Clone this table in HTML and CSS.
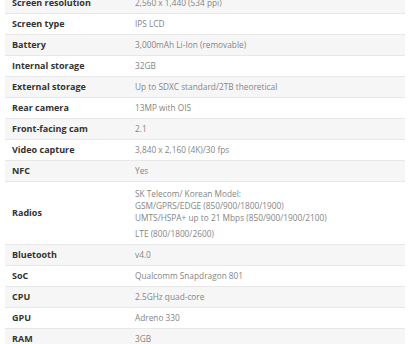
FILE: index.html
```html
<!DOCTYPE html>
<html>
<head>
<meta charset="utf-8">
<link rel="stylesheet" href="styles.css">
</head>
<body>
<div class="specs">
<table class="spec-table">
<tr><th>Screen resolution</th><td>2,560 x 1,440 (534 ppi)</td></tr>
<tr><th>Screen type</th><td>IPS LCD</td></tr>
<tr><th>Battery</th><td>3,000mAh Li-Ion (removable)</td></tr>
<tr><th>Internal storage</th><td>32GB</td></tr>
<tr><th>External storage</th><td>Up to SDXC standard/2TB theoretical</td></tr>
<tr><th>Rear camera</th><td>13MP with OIS</td></tr>
<tr><th>Front-facing cam</th><td>2.1</td></tr>
<tr><th>Video capture</th><td>3,840 x 2,160 (4K)/30 fps</td></tr>
<tr><th>NFC</th><td>Yes</td></tr>
<tr class="tall"><th>Radios</th><td><p>SK Telecom/ Korean Model:<br>GSM/GPRS/EDGE (850/900/1800/1900)<br>UMTS/HSPA+ up to 21 Mbps (850/900/1900/2100)</p><p>LTE (800/1800/2600)</p></td></tr>
<tr><th>Bluetooth</th><td>v4.0</td></tr>
<tr><th>SoC</th><td>Qualcomm Snapdragon 801</td></tr>
<tr><th>CPU</th><td>2.5GHz quad-core</td></tr>
<tr><th>GPU</th><td>Adreno 330</td></tr>
<tr><th>RAM</th><td>3GB</td></tr>
</table>
</div>
</body>
</html>
```
FILE: styles.css
```css
html, body {
  margin: 0;
  padding: 0;
  background: #ffffff;
}
.specs {
  margin: -7px 5px 0 5px;
}
.spec-table {
  width: 400px;
  border-collapse: collapse;
  font-family: "Open Sans", "Noto Sans", sans-serif;
  font-size: 8.3px;
  line-height: 12px;
}
.spec-table tr {
  border-bottom: 1px solid #e8e8e8;
}
.spec-table tr:nth-child(odd) {
  background: #f6f6f6;
}
.spec-table th {
  width: 109px;
  text-align: left;
  font-weight: 700;
  font-size: 9px;
  color: #333333;
  padding: 4px 7px;
  vertical-align: middle;
  height: 12px;
}
.spec-table td {
  color: #858585;
  padding: 4px 7px;
  vertical-align: middle;
}
.spec-table td p {
  margin: 0;
}
.spec-table td p + p {
  margin-top: 4px;
}
.spec-table .tall td {
  padding-top: 6px;
  padding-bottom: 4px;
}
```
